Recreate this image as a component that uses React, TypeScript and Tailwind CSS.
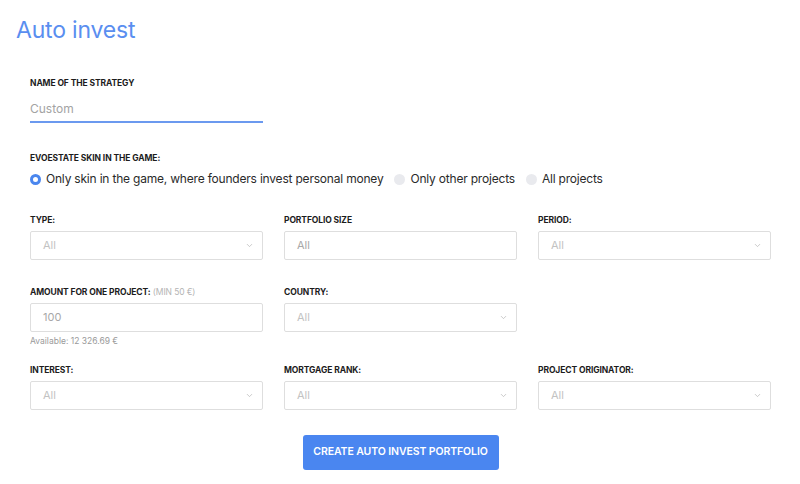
import { ChevronDown } from "lucide-react";

const font = { fontFamily: "Inter, 'Open Sans', sans-serif" };

function Label({ children, extra }: { children: string; extra?: string }) {
  return (
    <div className="h-[14px] text-[8.5px] font-bold uppercase tracking-[-0.1px] text-[#1c1c1c] leading-[14px]">
      {children}
      {extra && <span className="font-normal text-[#b4b4b4]"> {extra}</span>}
    </div>
  );
}

function SelectBox({ value = "All", arrow = true }: { value?: string; arrow?: boolean }) {
  return (
    <div className="mt-[4px] flex h-[29px] items-center justify-between border border-[#dedede] rounded-[2px] bg-white pl-[12px] pr-[8px]">
      <span className={`text-[11px] ${arrow ? "text-[#c2c2c2]" : "text-[#a8a8a8]"}`}>{value}</span>
      {arrow && <ChevronDown className="w-[9px] h-[9px] text-[#b9b9b9]" strokeWidth={2} />}
    </div>
  );
}

function Radio({ checked, label }: { checked?: boolean; label: string }) {
  return (
    <label className="flex items-center gap-[5px]">
      <span
        className={`w-[11px] h-[11px] rounded-full ${
          checked ? "border-[3px] border-[#4a86ee] bg-white" : "bg-[#e9eaee]"
        }`}
      />
      <span className="text-[12px] text-[#2a2a2a] tracking-[-0.2px]">{label}</span>
    </label>
  );
}

export default function App() {
  return (
    <div className="w-[800px] h-[484px] bg-white overflow-hidden" style={font}>
      <h1 className="pl-[16px] pt-[14px] text-[23px] leading-[32px] text-[#5a8ef0] font-normal tracking-[-0.2px]">
        Auto invest
      </h1>

      <div className="pl-[30px] w-[771px]">
        <div className="mt-[30px] w-[233px]">
          <Label>Name of the strategy</Label>
          <div className="mt-[6px] h-[27px] border-b-[2px] border-[#6b99ef] flex items-center">
            <span className="text-[12px] text-[#a3a3a3]">Custom</span>
          </div>
        </div>

        <div className="mt-[28px]">
          <Label>Evoestate skin in the game:</Label>
          <div className="mt-[5px] flex items-center gap-[11px]">
            <Radio checked label="Only skin in the game, where founders invest personal money" />
            <Radio label="Only other projects" />
            <Radio label="All projects" />
          </div>
        </div>

        <div className="mt-[25px] grid grid-cols-3 gap-x-[21px]">
          <div>
            <Label>Type:</Label>
            <SelectBox />
          </div>
          <div>
            <Label>Portfolio size</Label>
            <SelectBox arrow={false} />
          </div>
          <div>
            <Label>Period:</Label>
            <SelectBox />
          </div>
        </div>

        <div className="mt-[25px] grid grid-cols-3 gap-x-[21px]">
          <div>
            <Label extra="(min 50 €)">Amount for one project:</Label>
            <SelectBox value="100" arrow={false} />
            <div className="mt-[3px] text-[8.5px] text-[#9a9a9a]">Available: 12 326.69 €</div>
          </div>
          <div>
            <Label>Country:</Label>
            <SelectBox />
          </div>
        </div>

        <div className="mt-[15px] grid grid-cols-3 gap-x-[21px]">
          <div>
            <Label>Interest:</Label>
            <SelectBox />
          </div>
          <div>
            <Label>Mortgage rank:</Label>
            <SelectBox />
          </div>
          <div>
            <Label>Project originator:</Label>
            <SelectBox />
          </div>
        </div>

        <div className="mt-[25px] flex justify-center">
          <button className="w-[196px] h-[35px] rounded-[3px] bg-[#4a86f0] text-white text-[10.5px] font-semibold uppercase tracking-[-0.1px]">
            Create auto invest portfolio
          </button>
        </div>
      </div>
    </div>
  );
}
